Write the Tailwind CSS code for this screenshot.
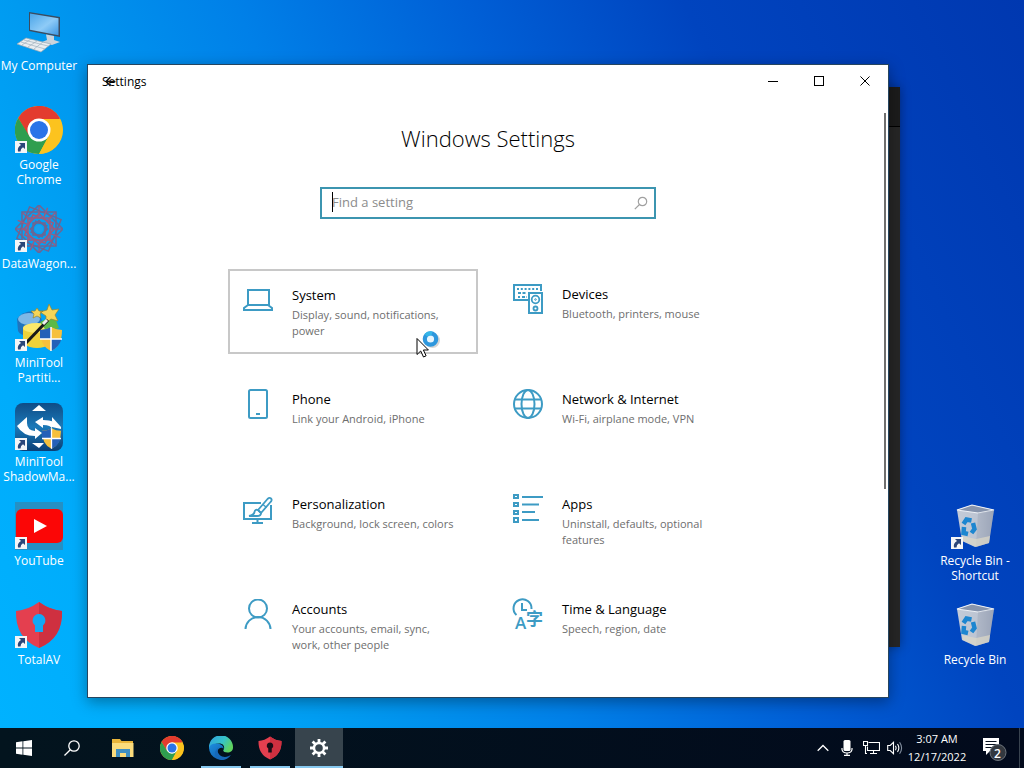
<!DOCTYPE html>
<html lang="en">
<head>
<meta charset="utf-8">
<title>Windows Settings</title>
<script src="https://cdn.jsdelivr.net/npm/@tailwindcss/browser@4"></script>
</head>
<body class="h-screen overflow-hidden flex flex-col text-xs font-['Open_Sans','Noto_Sans','Noto_Sans_CJK_SC',sans-serif]">

<!-- Shared symbols -->
<svg width="0" height="0" class="absolute" aria-hidden="true">
  <defs>
    <linearGradient id="scr" x1="0" y1="0" x2="1" y2="1"><stop offset="0" stop-color="#4aa5e8"/><stop offset=".55" stop-color="#8ecbf7"/><stop offset="1" stop-color="#3c97e2"/></linearGradient>
    <linearGradient id="bin" x1="0" y1="0" x2="1" y2="0"><stop offset="0" stop-color="#c3cbd8"/><stop offset=".6" stop-color="#bcc4d2"/><stop offset="1" stop-color="#a3acbf"/></linearGradient>
    <linearGradient id="sm" x1="0" y1="0" x2="0" y2="1"><stop offset="0" stop-color="#0f4c86"/><stop offset=".5" stop-color="#1b79b8"/><stop offset="1" stop-color="#0b3f75"/></linearGradient>
    <linearGradient id="edgeA" x1="0" y1="0" x2="1" y2=".5"><stop offset="0" stop-color="#2f9fe0"/><stop offset=".6" stop-color="#36c3c9"/><stop offset="1" stop-color="#5fd35f"/></linearGradient>
    <linearGradient id="edgeB" x1="0" y1="0" x2="1" y2="1"><stop offset="0" stop-color="#1e8fe0"/><stop offset="1" stop-color="#0c4f9e"/></linearGradient>
  </defs>
  <symbol id="shortcut" viewBox="0 0 12 12"><rect width="12" height="12" fill="#f4f5f7"/><path d="M4 2h6v6L8 6.200Q5.500 7.500 5.500 10.500H3Q2 6 6 4z" fill="#2b4679"/></symbol>
  <symbol id="chrome" viewBox="0 0 48 48">
    <circle cx="24" cy="24" r="24" fill="#fcc31e"/>
    <path d="M24 24 44.800 12A24 24 0 0 0 3.200 12L13.600 30z" fill="#e33b2e"/>
    <path d="M24 13h20.800A24 24 0 0 0 24 0z" fill="#e33b2e"/>
    <path d="M3.200 12A24 24 0 0 0 24 48L34 29.500 24 35 14 29.500z" fill="#2f9e4f"/>
    <path d="M24 48 34 29.500 24 24V13h20.800A24 24 0 0 1 24 48z" fill="#fcc31e"/>
    <circle cx="24" cy="24" r="11.500" fill="#fff"/><circle cx="24" cy="24" r="9" fill="#2a74e8"/>
  </symbol>
  <symbol id="shieldAV" viewBox="0 0 48 48">
    <path d="M24 1Q35 9 47 10Q48 37 24 47Q0 37 1 10Q13 9 24 1z" fill="#e43f4f"/>
    <path d="M24 1Q35 9 47 10Q48 37 24 47z" fill="#cf3040"/>
  </symbol>
  <symbol id="uac" viewBox="0 0 22 24">
    <path d="M11 0Q16 3 22 3Q22 19 11 24Q0 19 0 3Q6 3 11 0z" fill="#f6c03c"/>
    <path d="M11 0v12H0V3Q6 3 11 0zM11 12h10.500Q19 20.500 11 24z" fill="#2460b8"/>
    <path d="M11 0v24M0 12h22" stroke="#fff" stroke-width="1.500"/>
  </symbol>
  <symbol id="recycle" viewBox="0 0 48 48">
    <path d="M6 8 21 3 43 8 38 41 24 45 11 39z" fill="url(#bin)"/>
    <path d="M6 8 21 3 43 8 27 11z" fill="#8794ac" stroke="#eef1f6" stroke-width="1.200"/>
    <path d="M27 11 43 8 38 41 25 45z" fill="#8a94aa" opacity=".3"/>
    <path d="M11 34l14 3 14-3-1 7-13 4-13-6z" fill="#ddd8c8" opacity=".7"/>
    <g fill="none" stroke="#1d86d0" stroke-width="4.500"><path d="m12.500 22 3-4.500 5 1"/><path d="m22 21 1.500 6-3 4"/><path d="m17 32-4.500-1 .5-6"/></g>
  </symbol>
</svg>

<main class="relative flex-1 min-h-0 flex justify-between text-white leading-[15px] bg-[linear-gradient(65deg,#00b2ff_0%,#00acfb_12%,#009af0_26%,#0080e8_42%,#005fd6_59%,#0044bf_75%,#0038b0_100%)]">

  <nav aria-label="Desktop" class="w-[78px] pt-[7px] flex flex-col [text-shadow:0_1px_2px_rgba(0,40,90,.8)]">
    <button class="h-[99px] shrink-0 flex flex-col items-center justify-start">
      <svg class="size-12" viewBox="0 0 48 48"><path d="m14 5 31 5v20L14 24z" fill="#3a4c60"/><path d="m15 6.500 28.500 4.700v17L15 22.800z" fill="url(#scr)"/><path d="M31 27.500 39 29v4l6 2-8 3-10-3 5-2z" fill="#c9d3dc"/><path d="m11 31 25 6-10 8-24-8z" fill="#e9edf0" stroke="#9aa7b2" stroke-width=".7"/><path d="m9 33 24 6M6 35l24 7M16 32l-9 6m15-4-9 6m15-5-9 7" stroke="#9fb0bd" stroke-width=".7"/></svg>
      <span class="mt-[3px] whitespace-nowrap">My Computer</span>
    </button>
    <button class="h-[99px] shrink-0 flex flex-col items-center justify-start">
      <svg class="size-12" viewBox="0 0 48 48"><use href="#chrome"/><use href="#shortcut" x="0" y="35" width="12" height="12"/></svg>
      <span class="mt-[3px]">Google<br>Chrome</span>
    </button>
    <button class="h-[99px] shrink-0 flex flex-col items-center justify-start">
      <svg class="size-12" viewBox="0 0 48 48"><g fill="none" stroke="#6c6694" stroke-width="1.500"><g id="ring"><rect x="7" y="7" width="34" height="34"/><rect x="13" y="13" width="22" height="22" stroke="#9a5c80"/><rect x="18" y="18" width="12" height="12"/><path d="M24 1v10M24 37v10M1 24h10M37 24h10" stroke="#9a5c80"/></g><use href="#ring" transform="rotate(45 24 24)"/><use href="#ring" transform="rotate(22 24 24)"/></g><circle cx="24" cy="24" r="4" fill="#1ba0ee"/><use href="#shortcut" x="0" y="35" width="12" height="12"/></svg>
      <span class="mt-[3px] whitespace-nowrap">DataWagon...</span>
    </button>
    <button class="h-[99px] shrink-0 flex flex-col items-center justify-start">
      <svg class="size-12" viewBox="0 0 48 48"><path d="M2 15Q9 5 24 8l4 12-4 12Q6 34 3 27z" fill="#1f74bd"/><ellipse cx="14" cy="15" rx="11" ry="6" fill="#7fb8e6"/><path d="M8 24q15-8 28 0v16q-14 8-28 0z" fill="#f0d23a"/><ellipse cx="22" cy="24" rx="14" ry="5" fill="#fbe96b"/><path d="M25 18l14-7 5 13-12 4z" fill="#5cb947"/><path d="m34 0 3 6 7-1-4 6 3 6-7-2-5 4v-7l-6-4 7-2zM22 4l2 3 4 0-3 3 1 4-4-2-4 2 1-4-3-3 4 0z" fill="#f6d558" stroke="#96842e" stroke-width=".7"/><path d="M33 16 11 39" stroke="#191919" stroke-width="3"/><path d="m32 16-4 4" stroke="#eee" stroke-width="3"/><use href="#uac" x="25" y="23" width="22" height="24"/><use href="#shortcut" x="0" y="35" width="12" height="12"/></svg>
      <span class="mt-[3px]">MiniTool<br>Partiti...</span>
    </button>
    <button class="h-[99px] shrink-0 flex flex-col items-center justify-start">
      <svg class="size-12" viewBox="0 0 48 48"><rect width="48" height="48" rx="8" fill="url(#sm)"/><path d="m24 2 7 6H17zM24 45l-7-5h12z" fill="#fff"/><path d="M2 23 12 14v6q0 7 8 8v-3l7 5-7 6v-3Q8 33 2 23zM46 24Q41 17 28 17v-3l-8 5 8 6v-3q8 0 9 4v-2l9 2zM46 24 37 14v4z" fill="#fff"/><use href="#uac" x="27" y="25" width="19" height="21"/><use href="#shortcut" x="0" y="35" width="12" height="12"/></svg>
      <span class="mt-[3px]">MiniTool<br>ShadowMa...</span>
    </button>
    <button class="h-[99px] shrink-0 flex flex-col items-center justify-start">
      <svg class="size-12" viewBox="0 0 48 48"><rect width="48" height="48" fill="#2590c4"/><rect x="1" y="7" width="47" height="34" rx="6" fill="#fb0606"/><path d="m19 17 13 7-13 7z" fill="#fff"/><use href="#shortcut" x="0" y="35" width="12" height="12"/></svg>
      <span class="mt-[3px]">YouTube</span>
    </button>
    <button class="h-[99px] shrink-0 flex flex-col items-center justify-start">
      <svg class="size-12" viewBox="0 0 48 48"><use href="#shieldAV" width="48" height="48"/><path d="M24 13a6.500 6.500 0 0 1 4 11.500V31h-8v-6.500A6.500 6.500 0 0 1 24 13z" fill="#12a9f5"/><use href="#shortcut" x="0" y="35" width="12" height="12"/></svg>
      <span class="mt-[3px]">TotalAV</span>
    </button>
  </nav>

  <nav aria-label="Recycle bins" class="w-[98px] pb-[28px] flex flex-col justify-end [text-shadow:0_1px_2px_rgba(0,10,60,.8)]">
    <button class="h-[99px] shrink-0 flex flex-col items-center justify-start">
      <svg class="size-12" viewBox="0 0 48 48"><use href="#recycle" width="48" height="48"/><use href="#shortcut" x="0" y="35" width="12" height="12"/></svg>
      <span class="mt-[3px]">Recycle Bin -<br>Shortcut</span>
    </button>
    <button class="h-[99px] shrink-0 flex flex-col items-center justify-start">
      <svg class="size-12" viewBox="0 0 48 48"><use href="#recycle" width="48" height="48"/></svg>
      <span class="mt-[3px]">Recycle Bin</span>
    </button>
  </nav>

  <!-- Window lying behind Settings -->
  <div class="absolute left-[120px] top-[87px] w-[780px] h-[560px] bg-[#262626] shadow-[0_0_10px_rgba(0,0,0,.35)]"><div class="h-10 bg-[#1c1c1c] border-b border-black"></div></div>

  <!-- Settings window -->
  <section aria-label="Settings" class="absolute left-[87px] top-[64px] w-[802px] h-[634px] bg-white text-black border border-[#26455f] shadow-[0_4px_14px_rgba(0,0,0,.35)] flex flex-col overflow-hidden">
    <header class="h-8 shrink-0 flex items-center">
      <div class="relative pl-[14px] pt-[2px] flex-1 leading-4">Settings
        <button aria-label="Back" class="absolute left-[17px] top-[4px]"><svg class="size-[11px]" viewBox="0 0 10 10" fill="none" stroke="#111" stroke-width="1.300"><path d="M9.500 5H1M5 1 1 5l4 4"/></svg></button>
      </div>
      <button aria-label="Minimize" class="w-[46px] h-8 grid place-items-center"><svg class="size-[10px]" viewBox="0 0 10 10" shape-rendering="crispEdges"><path d="M0 5h10v1H0z"/></svg></button>
      <button aria-label="Maximize" class="w-[46px] h-8 grid place-items-center"><svg class="size-[10px]" viewBox="0 0 10 10" fill="none" stroke="#000"><rect x=".5" y=".5" width="9" height="9"/></svg></button>
      <button aria-label="Close" class="w-[46px] h-8 grid place-items-center"><svg class="size-[10px]" viewBox="0 0 11 11" stroke="#000" stroke-width="1.100"><path d="m.5.5 10 10m0-10-10 10"/></svg></button>
    </header>

    <div class="relative flex-1 flex flex-col items-center pt-[25px]">
      <h1 class="text-[22px] leading-8 font-light">Windows Settings</h1>
      <label class="relative mt-[33px] w-[336px] h-8 border-2 border-[#3c95b0] flex items-center pl-[10px] pr-[6px] shrink-0">
        <span class="absolute left-[10px] top-[3px] w-px h-5 bg-black"></span>
        <input type="text" aria-label="Find a setting" placeholder="Find a setting" class="flex-1 min-w-0 h-6 pb-[2px] text-[13px] outline-none placeholder:text-[#8c8c8c]">
        <svg class="size-[14px]" viewBox="0 0 14 14" fill="none" stroke="#a0a0a0" stroke-width="1.200"><circle cx="8.500" cy="5.500" r="4.200"/><path d="M5.500 8.500.8 13.200"/></svg>
      </label>

      <div class="mt-[50px] grid grid-cols-[250px_250px] gap-x-[20px] auto-rows-[85px] gap-y-[20px] text-[11px]">
        <a href="#system" class="border-2 border-[#c8c8c8] flex items-start pl-[13px] pr-[30px] pt-[14px] gap-[19px]">
          <svg class="size-[30px] shrink-0" viewBox="0 0 30 30" fill="none" stroke="#3d9bc4" stroke-width="2"><path d="M5 5h21v15H5zM5 20l-4 3v2h28v-2l-4-3"/></svg>
          <span class="flex-1"><span class="block text-[13px] leading-5">System</span><span class="block mt-[2px] leading-4 text-[#6e6e6e]">Display, sound, notifications, power</span></span>
        </a>
        <a href="#devices" class="flex items-start pl-[15px] pr-[30px] pt-[15px] gap-[19px]">
          <svg class="size-[30px] shrink-0" viewBox="0 0 30 30" fill="none" stroke="#3d9bc4" stroke-width="2"><path d="M15 16H1V1h27v6"/><path d="M4 5h21" stroke-dasharray="2 1.800"/><path d="M5 9h9M5 13h2m2 0h5" stroke-dasharray="3 1.500"/><rect x="16" y="9" width="13" height="20"/><circle cx="22.500" cy="15.500" r="3.800" stroke-width="1.800"/><circle cx="22.500" cy="15.500" r=".8" stroke-width="1"/><circle cx="22.500" cy="24.500" r="2" stroke-width="1.800"/></svg>
          <span class="flex-1"><span class="block text-[13px] leading-5">Devices</span><span class="block mt-[2px] leading-4 text-[#6e6e6e]">Bluetooth, printers, mouse</span></span>
        </a>
        <a href="#phone" class="flex items-start pl-[15px] pr-[30px] pt-[15px] gap-[19px]">
          <svg class="size-[30px] shrink-0" viewBox="0 0 30 30" fill="none" stroke="#3d9bc4" stroke-width="2"><rect x="6" y="1" width="18" height="28" rx="1.500"/><path d="M13 25h4"/></svg>
          <span class="flex-1"><span class="block text-[13px] leading-5">Phone</span><span class="block mt-[2px] leading-4 text-[#6e6e6e]">Link your Android, iPhone</span></span>
        </a>
        <a href="#network" class="flex items-start pl-[15px] pr-[30px] pt-[15px] gap-[19px]">
          <svg class="size-[30px] shrink-0" viewBox="0 0 30 30" fill="none" stroke="#3d9bc4" stroke-width="2"><circle cx="15" cy="15" r="14"/><ellipse cx="15" cy="15" rx="6.500" ry="14"/><path d="M2 10.500h26M2 19.500h26"/></svg>
          <span class="flex-1"><span class="block text-[13px] leading-5">Network &amp; Internet</span><span class="block mt-[2px] leading-4 text-[#6e6e6e]">Wi-Fi, airplane mode, VPN</span></span>
        </a>
        <a href="#personalization" class="flex items-start pl-[15px] pr-1 pt-[15px] gap-[19px]">
          <svg class="size-[30px] shrink-0" viewBox="0 -2 30 30" fill="none" stroke="#3d9bc4" stroke-width="2"><path d="M18 7H1v16h27V9M14.500 23v4M9 27h11"/><path d="M15 14 24.500 3q2-2 3.500-.5T27.500 6L18 17z" stroke-width="1.800"/><path d="m20 8.500 3.500 3" stroke-width="1.500"/><path d="M18 17q0 3-4 3H6q5-1 5.500-4T15 14z" stroke-width="1.800"/></svg>
          <span class="flex-1"><span class="block text-[13px] leading-5">Personalization</span><span class="block mt-[2px] leading-4 text-[#6e6e6e] whitespace-nowrap">Background, lock screen, colors</span></span>
        </a>
        <a href="#apps" class="flex items-start pl-[15px] pr-[30px] pt-[15px] gap-[19px]">
          <svg class="size-[30px] shrink-0" viewBox="0 0 30 30" fill="none" stroke="#3d9bc4" stroke-width="2"><path d="M1 1h4v3H1zM1 9h4v3H1zM1 17h4v3H1zM1 24h4v4H1z"/><path d="M9 3h21M9 10.500h17M9 18h13M9 26h17"/></svg>
          <span class="flex-1"><span class="block text-[13px] leading-5">Apps</span><span class="block mt-[2px] leading-4 text-[#6e6e6e]">Uninstall, defaults, optional features</span></span>
        </a>
        <a href="#accounts" class="flex items-start pl-[15px] pr-[30px] pt-[15px] gap-[19px]">
          <svg class="size-[30px] shrink-0" viewBox="0 0 30 30" fill="none" stroke="#3d9bc4" stroke-width="2"><circle cx="15" cy="9.500" r="9"/><path d="M2.500 30.500a12.500 12.500 0 0 1 25 0"/></svg>
          <span class="flex-1"><span class="block text-[13px] leading-5">Accounts</span><span class="block mt-[2px] leading-4 text-[#6e6e6e]">Your accounts, email, sync, work, other people</span></span>
        </a>
        <a href="#time" class="flex items-start pl-[15px] pr-[30px] pt-[15px] gap-[19px]">
          <svg class="size-[30px] shrink-0 overflow-visible" viewBox="0 0 30 30" fill="none" stroke="#3d9bc4" stroke-width="2"><path d="M3.500 16A9 9 0 1 1 18.500 10M9 4v7h5"/><g fill="#3d9bc4" stroke="none"><text x="2" y="30" font-size="17" font-weight="600">A</text><text x="13" y="26" font-size="17" font-weight="700" font-family="Noto Sans CJK SC">字</text></g></svg>
          <span class="flex-1"><span class="block text-[13px] leading-5">Time &amp; Language</span><span class="block mt-[2px] leading-4 text-[#6e6e6e]">Speech, region, date</span></span>
        </a>
      </div>

      <div class="absolute right-[2px] top-[16px] w-[2px] h-[376px] bg-[#6f6f6f]"></div>
    </div>
  </section>

  <!-- Pointer with busy ring -->
  <svg class="absolute left-[415px] top-[328px] w-[28px] h-[30px]" viewBox="0 0 28 30"><circle cx="17.500" cy="12.500" r="7.500" fill="#999" opacity=".4"/><circle cx="15.500" cy="11" r="5.700" fill="#e8f5fd" stroke="#2e97dd" stroke-width="4.200"/><path d="M11 7.500A5.700 5.700 0 0 1 17 5.500" fill="none" stroke="#35b6e8" stroke-width="4"/><path d="M2 10.500v16l3.700-3.500 2.800 6 2.600-1.200-2.700-5.800h5z" fill="#fff" stroke="#000"/></svg>
</main>

<footer class="h-10 shrink-0 flex justify-between text-white bg-linear-to-r from-[#03141e] to-[#020a1c]">
  <nav aria-label="Taskbar" class="flex">
    <button aria-label="Start" class="w-12 grid place-items-center"><svg class="size-4" viewBox="0 0 16 16" fill="#fff"><path d="m0 2.200 6.500-.9v6.200H0zM7.300 1.200 16 0v7.500H7.300zM0 8.400h6.500v6.300L0 13.800zM7.300 8.400H16V16l-8.700-1.200z"/></svg></button>
    <button aria-label="Search" class="w-12 grid place-items-center"><svg class="size-4" viewBox="0 0 16 16" fill="none" stroke="#fff" stroke-width="1.300"><circle cx="10" cy="6" r="5.200"/><path d="M6.300 9.700.5 15.500"/></svg></button>
    <button aria-label="File Explorer" class="ml-[2px] w-[49px] grid place-items-center"><svg class="w-[22px] h-[18px]" viewBox="0 0 22 18"><path d="M0 0h8l1.500 2H21v16H0z" fill="#e9b53a"/><path d="M0 4h21.500v14H0z" fill="#fbdc7c"/><path d="M4 10h14v8h-4v-4H8v4H4z" fill="#3f8fc2"/></svg></button>
    <button aria-label="Chrome" class="w-[49px] grid place-items-center"><svg class="size-6" viewBox="0 0 48 48"><use href="#chrome"/></svg></button>
    <button aria-label="Edge" class="relative w-[49px] grid place-items-center"><svg class="size-6" viewBox="0 0 24 24"><path d="M0 11A12 12 0 0 1 24 11.500c0 3.500-2.500 5-5.500 5s-5-1.200-4-2.700c1.500-2 .5-6.300-4-6.300Q3 7.500 0 13z" fill="url(#edgeA)"/><path d="M0 11.500Q2 7 8 7.500c4 .2 7 2.500 6.500 5.500-1-2-5.500-1.500-6 2.500-.4 4 4 6.500 8 6 2-.3 4-1.500 5-2.500A12 12 0 0 1 0 11.500z" fill="url(#edgeB)"/><path d="M8.500 15q1 5.500 7.500 6 3-.2 6-2-4 5.500-10 5-6-1.500-6-7 .3-3.500 4-5.500-1.600 1.700-1.500 3.500z" fill="#1668b8"/></svg><span class="absolute bottom-0 w-10 h-[2px] bg-[#86c8ef]"></span></button>
    <button aria-label="TotalAV" class="relative w-[49px] grid place-items-center"><svg class="size-6" viewBox="0 0 48 48"><use href="#shieldAV" width="48" height="48"/><path d="M24 13a6.500 6.500 0 0 1 3.500 12V33h-7v-8A6.500 6.500 0 0 1 24 13z" fill="#1b0c16"/></svg><span class="absolute bottom-0 w-10 h-[2px] bg-[#86c8ef]"></span></button>
    <button aria-label="Settings" class="relative ml-px w-12 grid place-items-center bg-[#37444d]"><svg class="size-[18px]" viewBox="0 0 18 18" fill="none" stroke="#fff"><circle cx="9" cy="9" r="5" stroke-width="2.400"/><path d="M9 0v4M9 14v4M0 9h4M14 9h4M2.600 2.600l3 3M12.400 12.400l3 3M15.400 2.600l-3 3M5.600 12.400l-3 3" stroke-width="2.800"/></svg><span class="absolute bottom-0 w-full h-[2px] bg-[#86c8ef]"></span></button>
  </nav>
  <div class="flex items-center">
    <button aria-label="Hidden icons" class="w-6 grid place-items-center"><svg class="w-3 h-2" viewBox="0 0 12 8" fill="none" stroke="#fff" stroke-width="1.300"><path d="M.7 6.800 6 1.500l5.300 5.300"/></svg></button>
    <button aria-label="Microphone" class="w-6 grid place-items-center"><svg class="w-3 h-4" viewBox="0 0 12 16"><rect x="2.500" y="0" width="7" height="11" rx="1.500" fill="#fff"/><path d="M1 8v1.500Q1.500 13 6 13t5-3.500V8M6 13v2.500M3 15.300h6" fill="none" stroke="#fff" stroke-width="1.200"/></svg></button>
    <button aria-label="Network" class="w-6 grid place-items-center"><svg class="w-[17px] h-4" viewBox="0 0 17 16" fill="none" stroke="#fff"><path d="M5.500 2.500h11v8H4.500v-4M10.500 10.500v3M7 13.500h7M.5 1.500h4v4h-4zM2.500 5.500v8H4" stroke-width="1.100"/></svg></button>
    <button aria-label="Volume" class="w-6 grid place-items-center"><svg class="size-4" viewBox="0 0 16 16" fill="none" stroke="#fff" stroke-width="1.100"><path d="M.7 5.500h2.500L6.500 2.300v11.400L3.200 10.500H.7zM8.500 5.800q1.300 2.200 0 4.400M10.500 4q2.700 4 0 8"/><path d="M12.600 2.300q4 5.700 0 11.400" stroke="#8490a0"/></svg></button>
    <button aria-label="Clock" class="w-[60px] text-center text-[11px] leading-[18px] whitespace-nowrap">3:07 AM<br>12/17/2022</button>
    <button aria-label="2 notifications" class="relative ml-[14px] w-[28px] h-10"><svg class="mt-[2px] w-[28px] h-[28px]" viewBox="0 0 28 28"><path d="M2 3h16v13h-9l-4 4v-4H2z" fill="#fff"/><path d="M4.500 6.500h11M4.500 9.500h11M4.500 12.500h7" stroke="#06101e" stroke-width="1.200"/><circle cx="17" cy="17.500" r="8" fill="#33383f" stroke="#6d747c"/></svg><span class="absolute left-[13px] top-[18px] text-xs leading-4 font-semibold">2</span></button>
    <div class="ml-[10px] mr-1 w-px h-10 bg-[#39434f]"></div>
  </div>
</footer>
</body>
</html>
